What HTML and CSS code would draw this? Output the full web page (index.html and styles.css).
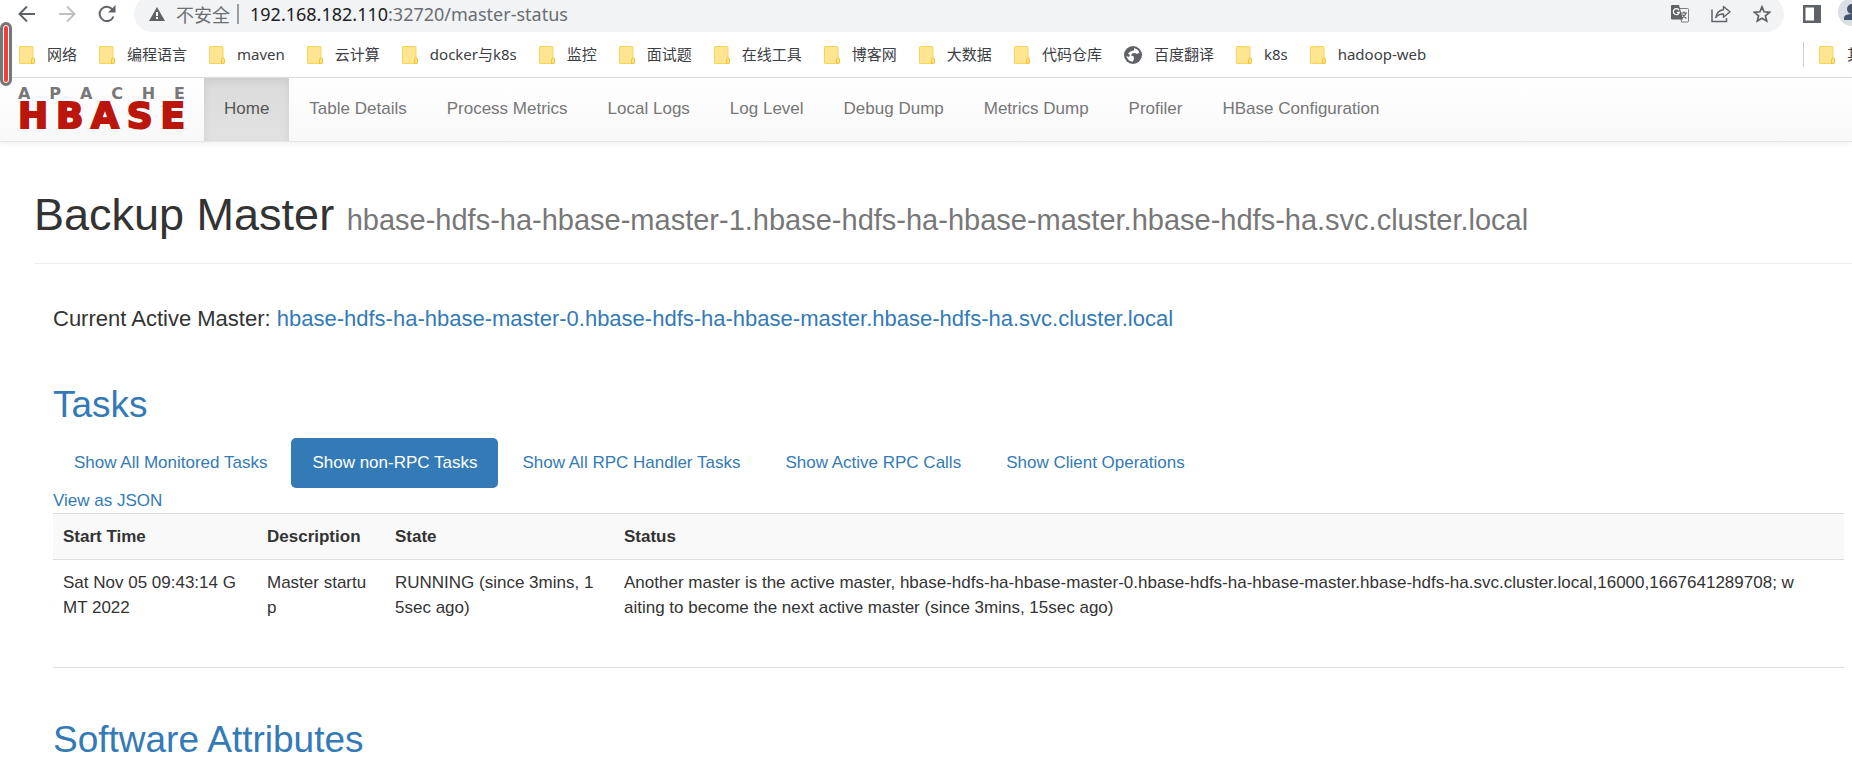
FILE: index.html
```html
<!DOCTYPE html>
<html lang="en">
<head>
<meta charset="utf-8">
<title>Master: HBase</title>
<link rel="stylesheet" href="styles.css">
</head>
<body>
<svg class="sprite" aria-hidden="true">
  <symbol id="folder" viewBox="0 0 16 18">
    <path d="M1 .5h12.500q.5 0 .5.5v11l1.500 1.500v3q0 1-1 1H1q-.5 0-.5-.5V1q0-.5.5-.5z" fill="#ffe592" stroke="#f7d55c"/>
    <path d="M12.500 17v-3.500q0-1.500 1.500-1.500t1.500 1.500V16q0 1.500-1.500 1.500h-1.500z" fill="#ffe180" stroke="#efc53c"/>
  </symbol>
</svg>

<div class="browser">
  <div class="toolbar">
    <div class="history">
      <button class="icon-button" aria-label="Back"><svg width="18" height="18" viewBox="0 0 18 18"><path d="M17 9H2M9 1.500 1.500 9 9 16.500" fill="none" stroke="#5f6368" stroke-width="2"/></svg></button>
      <button class="icon-button" aria-label="Forward"><svg width="18" height="18" viewBox="0 0 18 18"><path d="M1 9h15M9 1.500 16.500 9 9 16.500" fill="none" stroke="#bfc1c3" stroke-width="2"/></svg></button>
      <button class="icon-button" aria-label="Reload"><svg width="18" height="18" viewBox="0 0 18 18"><path d="M15.500 11.500A7.200 7.200 0 1 1 14.500 4.500" fill="none" stroke="#5f6368" stroke-width="2"/><path d="M17.500 0v7.500H10z" fill="#5f6368"/></svg></button>
    </div>
    <div class="address">
      <svg width="16" height="14" viewBox="0 0 16 14"><path d="M8 0 16 14H0z" fill="#5f6368"/><path d="M7 5h2v4H7zM7 10h2v2H7z" fill="#fff"/></svg>
      <span class="insecure" lang="zh">不安全</span>
      <span class="separator"></span>
      <span class="url"><span class="host">192.168.182.110</span>:32720/master-status</span>
      <span class="page-actions">
        <button class="icon-button" aria-label="Translate"><svg width="18" height="18" viewBox="0 0 18 18"><path d="M8 3.500h8.500q1 0 1 1v11.500q0 1-1 1h-6z" fill="#f1f3f4" stroke="#7a7e82"/><path d="M1 0h7l4 14.500H1q-1 0-1-1V1q0-1 1-1z" fill="#5f6368"/><path d="M8 5.200A3 3 0 1 0 8.300 7.300H5.800" fill="none" stroke="#fff" stroke-width="1.300"/><path d="M10 8h6M13 6.500V8M15 8q-.8 3-4 5M11.500 9.500q1 2.500 4 4" fill="none" stroke="#5f6368" stroke-width="1.100"/></svg></button>
        <button class="icon-button" aria-label="Share"><svg width="20" height="18" viewBox="0 0 20 18"><path d="M1 4.500V16.500H15.500V13" fill="none" stroke="#5f6368" stroke-width="1.500"/><path d="M12.500 1.500 19 6.800l-6.500 5.400V9Q7.500 8.800 4.800 12.500 5.800 5.500 12.500 4.700z" fill="none" stroke="#5f6368" stroke-width="1.400" stroke-linejoin="round"/></svg></button>
        <button class="icon-button" aria-label="Bookmark this page"><svg width="18" height="18" viewBox="0 0 18 18"><path d="m9 1.800 2.100 5 5.400.5-4.100 3.500 1.300 5.300L9 13.300l-4.700 2.800 1.300-5.300L1.500 7.300l5.400-.5z" fill="none" stroke="#5f6368" stroke-width="1.700"/></svg></button>
      </span>
    </div>
    <button class="icon-button side-panel" aria-label="Side panel"><svg width="18" height="18" viewBox="0 0 18 18"><path d="M0 0h18v18H0z" fill="#5f6368"/><path d="M2.500 2.500h8.500v13H2.500z" fill="#fff"/></svg></button>
    <button class="icon-button profile" aria-label="Profile"><svg width="28" height="28" viewBox="0 0 28 28"><circle cx="14" cy="14" r="14" fill="#dadfe6"/><circle cx="14" cy="11" r="5" fill="#44546f"/><path d="M6 22v-2q0-4 8-4t8 4v2z" fill="#44546f"/></svg></button>
  </div>

  <div class="bookmarks" lang="zh">
    <a class="bookmark" href="#"><svg width="16" height="18"><use href="#folder"/></svg>网络</a>
    <a class="bookmark" href="#"><svg width="16" height="18"><use href="#folder"/></svg>编程语言</a>
    <a class="bookmark" href="#"><svg width="16" height="18"><use href="#folder"/></svg>maven</a>
    <a class="bookmark" href="#"><svg width="16" height="18"><use href="#folder"/></svg>云计算</a>
    <a class="bookmark" href="#"><svg width="16" height="18"><use href="#folder"/></svg>docker与k8s</a>
    <a class="bookmark" href="#"><svg width="16" height="18"><use href="#folder"/></svg>监控</a>
    <a class="bookmark" href="#"><svg width="16" height="18"><use href="#folder"/></svg>面试题</a>
    <a class="bookmark" href="#"><svg width="16" height="18"><use href="#folder"/></svg>在线工具</a>
    <a class="bookmark" href="#"><svg width="16" height="18"><use href="#folder"/></svg>博客网</a>
    <a class="bookmark" href="#"><svg width="16" height="18"><use href="#folder"/></svg>大数据</a>
    <a class="bookmark" href="#"><svg width="16" height="18"><use href="#folder"/></svg>代码仓库</a>
    <a class="bookmark" href="#"><svg width="18" height="18" viewBox="0 0 18 18"><circle cx="9" cy="9" r="9" fill="#5f6368"/><path d="M10 2.200Q14 3 15.500 6.500L13 8l-2-1-3 .5-1 2 2.500.8.500 2-1 3.500Q4 15.500 2.300 10L5 11l1-2-2-1.500L7 5l3-.5z" fill="#fff"/></svg>百度翻译</a>
    <a class="bookmark" href="#"><svg width="16" height="18"><use href="#folder"/></svg>k8s</a>
    <a class="bookmark" href="#"><svg width="16" height="18"><use href="#folder"/></svg>hadoop-web</a>
    <span class="more"><a class="bookmark" href="#"><svg width="16" height="18"><use href="#folder"/></svg>其他书签</a></span>
  </div>
  <span class="marker"></span>
</div>

<nav class="navbar">
  <a class="brand" href="#" aria-label="Apache HBase">
    <span class="brand-top"><span>A</span><span>P</span><span>A</span><span>C</span><span>H</span><span>E</span></span>
    <span class="brand-name"><span>H</span><span>B</span><span>A</span><span>S</span><span>E</span></span>
  </a>
  <a class="nav-link active" href="#">Home</a>
  <a class="nav-link" href="#">Table Details</a>
  <a class="nav-link" href="#">Process Metrics</a>
  <a class="nav-link" href="#">Local Logs</a>
  <a class="nav-link" href="#">Log Level</a>
  <a class="nav-link" href="#">Debug Dump</a>
  <a class="nav-link" href="#">Metrics Dump</a>
  <a class="nav-link" href="#">Profiler</a>
  <a class="nav-link" href="#">HBase Configuration</a>
</nav>

<main class="page">
  <header class="page-header">
    <h1>Backup Master <small>hbase-hdfs-ha-hbase-master-1.hbase-hdfs-ha-hbase-master.hbase-hdfs-ha.svc.cluster.local</small></h1>
  </header>
  <div class="content">
    <h4>Current Active Master: <a href="#">hbase-hdfs-ha-hbase-master-0.hbase-hdfs-ha-hbase-master.hbase-hdfs-ha.svc.cluster.local</a></h4>
    <section class="tasks">
      <h2><a href="#">Tasks</a></h2>
      <div class="pills">
        <a class="pill" href="#">Show All Monitored Tasks</a>
        <a class="pill active" href="#">Show non-RPC Tasks</a>
        <a class="pill" href="#">Show All RPC Handler Tasks</a>
        <a class="pill" href="#">Show Active RPC Calls</a>
        <a class="pill" href="#">Show Client Operations</a>
      </div>
      <a class="json" href="#">View as JSON</a>
      <table class="task-table">
        <colgroup><col class="col-start"><col class="col-description"><col class="col-state"><col></colgroup>
        <thead>
          <tr><th>Start Time</th><th>Description</th><th>State</th><th>Status</th></tr>
        </thead>
        <tbody>
          <tr>
            <td>Sat Nov 05 09:43:14 G<br>MT 2022</td>
            <td>Master startu<br>p</td>
            <td>RUNNING (since 3mins, 1<br>5sec ago)</td>
            <td>Another master is the active master, hbase-hdfs-ha-hbase-master-0.hbase-hdfs-ha-hbase-master.hbase-hdfs-ha.svc.cluster.local,16000,1667641289708; w<br>aiting to become the next active master (since 3mins, 15sec ago)</td>
          </tr>
        </tbody>
      </table>
    </section>
    <section>
      <h2><a href="#">Software Attributes</a></h2>
    </section>
  </div>
</main>
</body>
</html>
```
FILE: styles.css
```css
* { box-sizing: border-box; }

body {
  margin: 0;
  background: #fff;
  color: #333;
  font: 17px/25px "Liberation Sans", Arial, sans-serif;
  overflow: hidden;
}

a { color: #337ab7; text-decoration: none; }
svg { display: block; flex: none; }
.sprite { position: absolute; width: 0; height: 0; }

/* Browser frame */
.browser {
  display: flow-root;
  position: relative;
  z-index: 1;
  border-bottom: 1px solid #dadce0;
  font-family: "Noto Sans", "Noto Sans CJK SC", sans-serif;
}

.toolbar { display: flex; align-items: center; height: 36px; margin-top: -4px; font-size: 18px; }
.history { display: flex; gap: 22px; padding-left: 18px; width: 134px; flex: none; }
.icon-button { padding: 0; border: 0; background: none; flex: none; }

.address {
  display: flex;
  align-items: center;
  flex: 1;
  height: 36px;
  padding: 0 13px 0 15px;
  border-radius: 18px;
  background: #f1f3f4;
  color: #6a6e72;
}

.insecure { margin-left: 11px; font-family: "Noto Sans CJK SC", sans-serif; }
.separator { width: 2px; height: 20px; margin: 0 11px 0 7px; background: #9b9ea2; }
.host { color: #202124; }
.page-actions { display: flex; gap: 22px; margin-left: auto; }
.side-panel { margin-left: 19px; }
.profile { margin: -4px -14px 0 17px; }

.bookmarks {
  display: flex;
  align-items: center;
  gap: 22px;
  height: 45px;
  padding-left: 19px;
  font-size: 15px;
  white-space: nowrap;
}

.bookmark { display: flex; align-items: center; gap: 12px; color: #3c4043; }

.more {
  width: 49px;
  margin-left: auto;
  padding-left: 15px;
  border-left: 1px solid #cccfd2;
}

.marker {
  position: absolute;
  left: 0;
  top: 22px;
  width: 12px;
  height: 64px;
  border: 3px solid #777;
  border-radius: 6px;
  background: #f33b3b;
  box-shadow: inset 0 0 0 1px #fff;
}

/* Site navigation */
.navbar {
  display: flex;
  height: 64px;
  padding-left: 18px;
  border-bottom: 1px solid #e7e7e7;
  background: linear-gradient(#fff, #f8f8f8);
  box-shadow: 0 1px 6px rgba(0, 0, 0, .08);
}

.brand { width: 167px; margin-right: 19px; padding-top: 8px; font-family: "DejaVu Sans", sans-serif; font-weight: bold; }
.brand-top, .brand-name { display: flex; justify-content: space-between; }
.brand-top { color: #777; font-size: 16px; line-height: 16px; }
.brand-name { color: #ba160c; font-size: 36px; line-height: 28px; -webkit-text-stroke: 2px #ba160c; }

.nav-link { padding: 18px 20px; color: #777; }
.nav-link.active {
  color: #555;
  background: linear-gradient(#dbdbdb, #e2e2e2);
  box-shadow: inset 0 3px 9px rgba(0, 0, 0, .08);
}

/* Page */
.page { padding: 48px 0 0 34px; }
.page-header { padding-bottom: 18px; border-bottom: 1px solid #eee; }
h1, h2, h4 { margin: 0; font-weight: normal; }
h1 { font-size: 45px; line-height: 50px; white-space: nowrap; }
h1 small { color: #777; font-size: 29px; }
.content { padding: 42px 8px 0 19px; }
h4 { font-size: 22px; line-height: 25px; }
h2 { font-size: 37px; line-height: 42px; }
.tasks { padding: 53px 0 51px; }

.pills { display: flex; gap: 3px; margin-top: 12px; }
.pill { padding: 12px 21px; border-radius: 5px; line-height: 26px; }
.pill.active { color: #fff; background: #337ab7; }
.json { display: block; }

.task-table {
  width: 100%;
  table-layout: fixed;
  border-collapse: collapse;
  border-bottom: 1px solid #ddd;
}

.col-start { width: 204px; }
.col-description { width: 128px; }
.col-state { width: 229px; }
th, td { padding: 10px; border-top: 1px solid #ddd; text-align: left; vertical-align: top; }
th { background: #f9f9f9; }
td { padding-bottom: 47px; white-space: nowrap; }
```
